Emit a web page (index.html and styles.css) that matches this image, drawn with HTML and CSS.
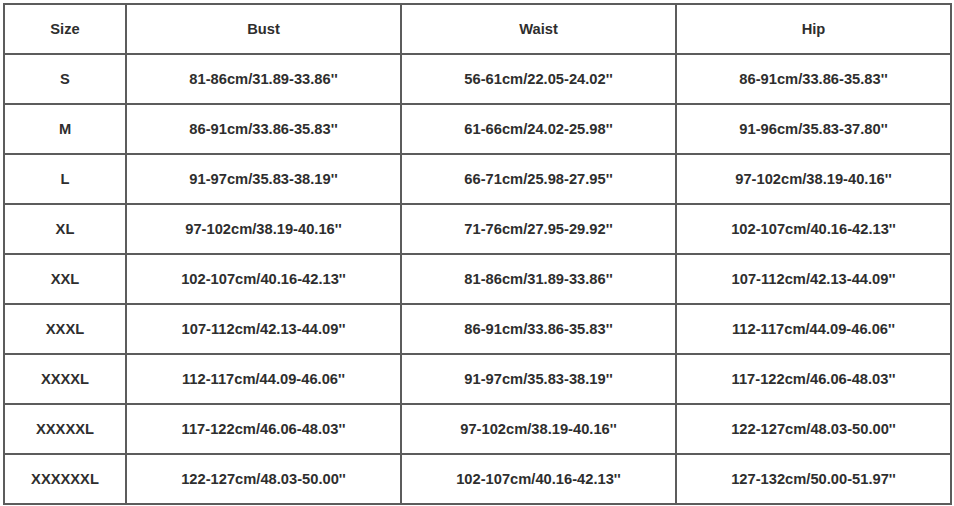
FILE: index.html
```html
<!DOCTYPE html>
<html>
<head>
<meta charset="utf-8">
<link rel="stylesheet" href="styles.css">
</head>
<body>
<table class="size-table">
<colgroup>
<col class="c-size"><col class="c-val"><col class="c-val"><col class="c-val">
</colgroup>
<tr><td>Size</td><td>Bust</td><td>Waist</td><td>Hip</td></tr>
<tr><td>S</td><td>81-86cm/31.89-33.86''</td><td>56-61cm/22.05-24.02''</td><td>86-91cm/33.86-35.83''</td></tr>
<tr><td>M</td><td>86-91cm/33.86-35.83''</td><td>61-66cm/24.02-25.98''</td><td>91-96cm/35.83-37.80''</td></tr>
<tr><td>L</td><td>91-97cm/35.83-38.19''</td><td>66-71cm/25.98-27.95''</td><td>97-102cm/38.19-40.16''</td></tr>
<tr><td>XL</td><td>97-102cm/38.19-40.16''</td><td>71-76cm/27.95-29.92''</td><td>102-107cm/40.16-42.13''</td></tr>
<tr><td>XXL</td><td>102-107cm/40.16-42.13''</td><td>81-86cm/31.89-33.86''</td><td>107-112cm/42.13-44.09''</td></tr>
<tr><td>XXXL</td><td>107-112cm/42.13-44.09''</td><td>86-91cm/33.86-35.83''</td><td>112-117cm/44.09-46.06''</td></tr>
<tr><td>XXXXL</td><td>112-117cm/44.09-46.06''</td><td>91-97cm/35.83-38.19''</td><td>117-122cm/46.06-48.03''</td></tr>
<tr><td>XXXXXL</td><td>117-122cm/46.06-48.03''</td><td>97-102cm/38.19-40.16''</td><td>122-127cm/48.03-50.00''</td></tr>
<tr><td>XXXXXXL</td><td>122-127cm/48.03-50.00''</td><td>102-107cm/40.16-42.13''</td><td>127-132cm/50.00-51.97''</td></tr>
</table>
</body>
</html>
```
FILE: styles.css
```css
html, body {
  margin: 0;
  padding: 0;
  background: #ffffff;
}
body {
  padding: 3px 0 0 3px;
}
.size-table {
  border-collapse: collapse;
  table-layout: fixed;
  width: 947px;
  font-family: "Liberation Sans", Arial, sans-serif;
  font-weight: bold;
  font-size: 14.7px;
  color: #2e2e2e;
}
.c-size { width: 122px; }
.c-val { width: 275px; }
.size-table td {
  border: 2px solid #5c5c5c;
  height: 48px;
  padding: 0;
  text-align: center;
  vertical-align: middle;
}
```
